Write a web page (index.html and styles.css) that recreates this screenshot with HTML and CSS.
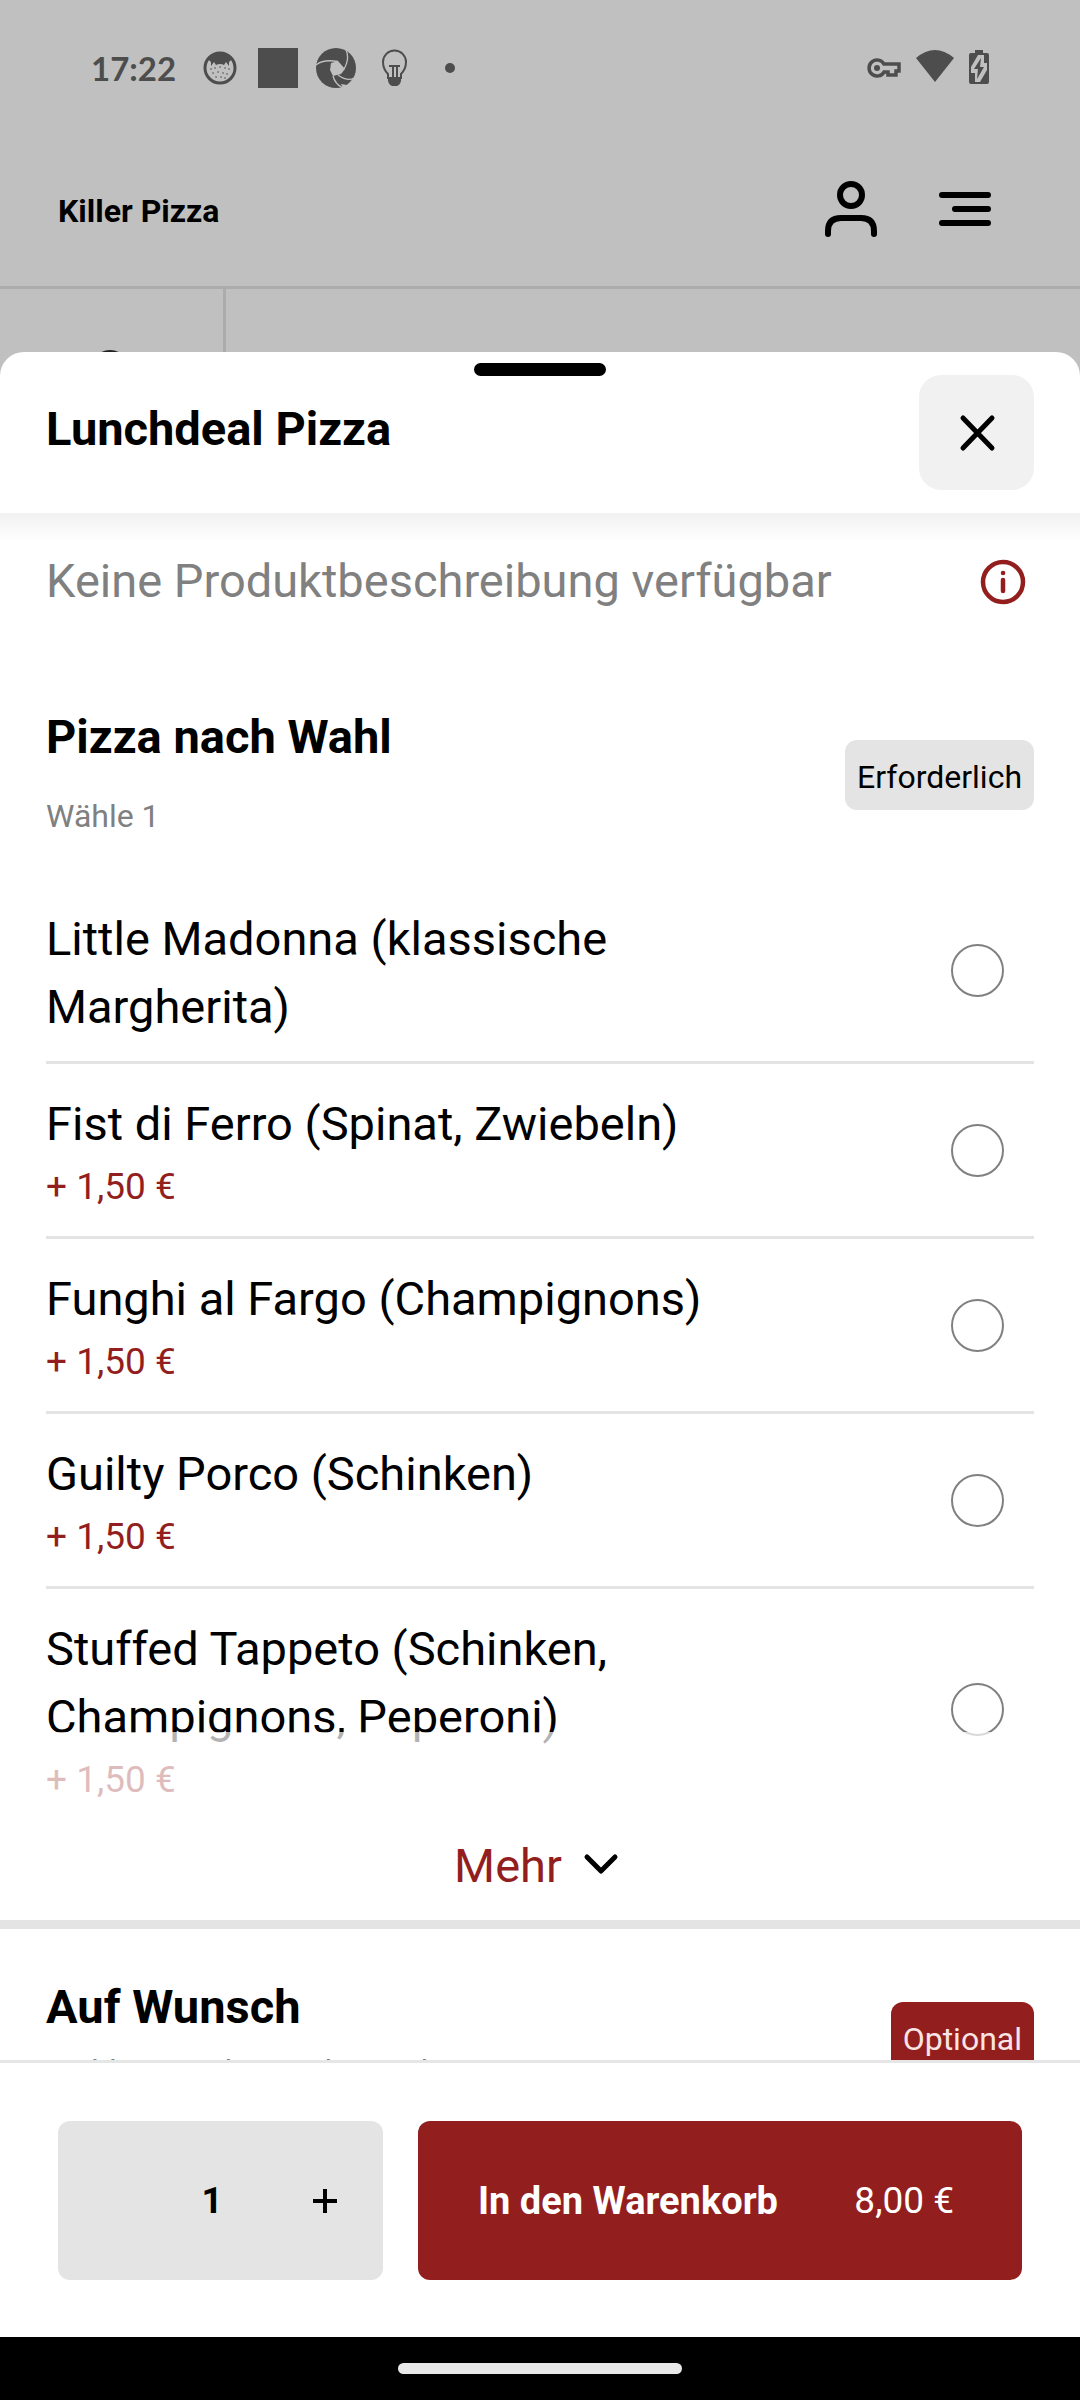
FILE: index.html
```html
<!DOCTYPE html>
<html lang="de">
<head>
    <meta charset="UTF-8">
    <meta name="viewport" content="width=device-width, initial-scale=1.0">
    <title>Killer Pizza - Lunchdeal Pizza</title>
    <link rel="stylesheet" href="styles.css">
</head>
<body>
    <div id="backdrop">
        <div class="status-bar">
            <div class="status-left">
                <span class="time">17:22</span>
                <svg class="status-icon" viewBox="0 0 40 40">
                    <circle cx="20" cy="20" r="15" fill="none" stroke="currentColor" stroke-width="3"/>
                    <path fill="currentColor" d="M8 11Q13 4 20 4T32 11L29 14V18L26 14L24 17Q20 15 16 17L14 14L11 18V14Z"/>
                    <path fill="none" stroke="currentColor" stroke-width="1.5" stroke-linecap="round" d="M11 21h.1M15 20h.1M20 19h.1M25 20h.1M29 21h.1M13 25h.1M18 24h.1M23 25h.1M27 26h.1M16 29h.1M21 29h.1M25 30h.1"/>
                </svg>
                <svg class="status-icon" viewBox="0 0 40 40"><path fill="currentColor" d="M0 0h40v40H0z"/></svg>
                <svg class="status-icon" viewBox="0 0 40 40">
                    <circle cx="20" cy="20" r="20" fill="currentColor"/>
                    <path fill="#c0c0c0" d="M15 15L22 13L29 21L25 26L17 28L14 22Z"/>
                    <path fill="none" stroke="#c0c0c0" stroke-width="1.3" d="M0 17Q7 11 22 13.500M30 2Q34 10 28 21M38 30Q32 34 22 27M27 40Q19 36 17 28"/>
                    <path fill="#c0c0c0" d="M27 40L25 36L31 37L37 31L40 33V40Z"/>
                </svg>
                <svg class="status-icon" viewBox="0 0 40 40">
                    <path fill="none" stroke="currentColor" stroke-width="2" d="M14 31V26Q9 21 9 14A11.500 11.500 0 0 1 32 14Q32 21 27 26V31"/>
                    <path fill="currentColor" d="M14 29H27V33Q26 37 23 38H18Q15 37 14 33ZM15 17H26V19H24V30H22V19H20V30H18V19H15Z"/>
                </svg>
                <svg class="status-icon" viewBox="0 0 40 40"><circle cx="18" cy="20" r="5" fill="currentColor"/></svg>
            </div>
            <div class="status-right">
                <svg width="34" height="40" viewBox="0 0 34 40">
                    <path fill="none" stroke="currentColor" stroke-width="3.500" d="M17 16A8 8 0 1 0 17 24H21V27H29V23H32V16Z"/>
                    <circle cx="10" cy="20" r="3" fill="currentColor"/>
                </svg>
                <svg width="40" height="40" viewBox="0 0 40 40"><path fill="currentColor" d="M1 10Q20-6 39 10L20 34Z"/></svg>
                <svg width="20" height="40" viewBox="0 0 20 40">
                    <path fill="currentColor" d="M6 2h8v3h4q2 0 2 2v27q0 2-2 2H2q-2 0-2-2V7q0-2 2-2h4z"/>
                    <path fill="#c0c0c0" d="M9 7H15V15H18V22L11 34H6V25H2V19Z"/>
                    <path fill="currentColor" d="M12 10L5 21H9L8 31L15 19H11Z"/>
                </svg>
            </div>
        </div>
        <header class="shop-header">
            <a class="shop-name" href="#">Killer Pizza</a>
            <div class="shop-actions">
                <button type="button" class="icon-btn" aria-label="Konto">
                    <svg width="60" height="60" viewBox="0 0 60 60" fill="none" stroke="#000" stroke-width="6" stroke-linecap="round">
                        <circle cx="30" cy="14" r="11"/>
                        <path d="M7 53V50Q7 37 20 37H40Q53 37 53 50V53"/>
                    </svg>
                </button>
                <button type="button" class="icon-btn" aria-label="Menü">
                    <svg width="60" height="60" viewBox="0 0 60 60" fill="none" stroke="#000" stroke-width="6" stroke-linecap="round">
                        <path d="M7 14H53M20 28H53M7 42H53"/>
                    </svg>
                </button>
            </div>
        </header>
        <nav class="shop-tabs">
            <a class="search-tab" href="#" aria-label="Suche">
                <svg width="48" height="48" viewBox="0 0 48 48" fill="none" stroke="#222" stroke-width="4" stroke-linecap="round">
                    <circle cx="20" cy="20" r="17"/>
                    <path d="M33 33L45 45"/>
                </svg>
            </a>
        </nav>
    </div>

    <main id="sheet">
        <div class="sheet-header">
            <span class="handle"></span>
            <h1>Lunchdeal Pizza</h1>
            <button type="button" class="close-btn" aria-label="Schließen">
                <svg width="48" height="48" viewBox="0 0 48 48" fill="none" stroke="#000" stroke-width="5" stroke-linecap="round">
                    <path d="M10 9L39 39M39 9L10 39"/>
                </svg>
            </button>
        </div>

        <div class="sheet-body">
            <div class="description">
                <p>Keine Produktbeschreibung verfügbar</p>
                <button type="button" class="icon-btn" aria-label="Produktinformationen">
                    <svg width="60" height="60" viewBox="0 0 60 60" fill="none" stroke="#931e1e" stroke-linecap="round">
                        <circle cx="29" cy="31" r="20" stroke-width="4.500"/>
                        <path stroke-width="4.500" d="M29 29V40M29 22h.1"/>
                    </svg>
                </button>
            </div>

            <section class="group group-required">
                <div class="group-header">
                    <div class="group-text">
                        <h2>Pizza nach Wahl</h2>
                        <p>Wähle 1</p>
                    </div>
                    <span class="badge">Erforderlich</span>
                </div>
                <ul class="options">
                    <li>
                        <label for="madonna">Little Madonna (klassische Margherita)</label>
                        <input type="radio" name="pizza" id="madonna">
                    </li>
                    <li>
                        <label for="ferro">Fist di Ferro (Spinat, Zwiebeln) <span class="extra">+ 1,50 €</span></label>
                        <input type="radio" name="pizza" id="ferro">
                    </li>
                    <li>
                        <label for="fargo">Funghi al Fargo (Champignons) <span class="extra">+ 1,50 €</span></label>
                        <input type="radio" name="pizza" id="fargo">
                    </li>
                    <li>
                        <label for="porco">Guilty Porco (Schinken) <span class="extra">+ 1,50 €</span></label>
                        <input type="radio" name="pizza" id="porco">
                    </li>
                    <li>
                        <label for="tappeto">Stuffed Tappeto (Schinken, Champignons, Peperoni) <span class="extra">+ 1,50 €</span></label>
                        <input type="radio" name="pizza" id="tappeto">
                    </li>
                </ul>
                <!-- fades out the last option -->
                <div class="more">
                    <button type="button" class="more-btn">
                        Mehr
                        <svg width="48" height="48" viewBox="0 0 48 48" fill="none" stroke="#000" stroke-width="5" stroke-linecap="round" stroke-linejoin="round">
                            <path d="M9 15L23 29L37 15"/>
                        </svg>
                    </button>
                </div>
            </section>

            <section class="group group-optional">
                <div class="group-header">
                    <div class="group-text">
                        <h2>Auf Wunsch</h2>
                        <p>Wähle so viele wie du möchtest</p>
                    </div>
                    <span class="badge badge-optional">Optional</span>
                </div>
            </section>
        </div>

        <form class="cart-bar">
            <div class="quantity">
                <input type="text" inputmode="numeric" value="1" aria-label="Anzahl">
                <button type="button" aria-label="Mehr">
                    <svg width="24" height="24" viewBox="0 0 24 24" fill="none" stroke="#000" stroke-width="4">
                        <path d="M0 12H24M12 0V24"/>
                    </svg>
                </button>
            </div>
            <button type="submit" class="cart-btn">
                <strong>In den Warenkorb</strong>
                <span>8,00 €</span>
            </button>
        </form>
    </main>

    <div class="nav-bar"><span></span></div>
</body>
</html>
```
FILE: styles.css
```css
* {
    margin: 0;
    padding: 0;
    box-sizing: border-box;
}

body {
    font-family: 'Roboto', sans-serif;
    font-size: 47px;
    line-height: 68px;
    color: #000;
    background: #c0c0c0;
    display: flex;
    flex-direction: column;
    height: 100vh;
    overflow: hidden;
}

button,
input {
    font: inherit;
    color: inherit;
    border: none;
    background: none;
}

button {
    cursor: pointer;
}

svg {
    display: block;
    flex-shrink: 0;
}

/* Status bar */
.status-bar {
    display: flex;
    justify-content: space-between;
    align-items: center;
    height: 136px;
    padding: 0 91px;
    color: #4d4d4d;
}

.status-left,
.status-right {
    display: flex;
    align-items: center;
}

.status-left {
    gap: 18px;
}

.status-right {
    gap: 14px;
}

.time {
    font-family: 'Lato', sans-serif;
    font-size: 33px;
    font-weight: bold;
    margin-right: 6px;
}

.status-icon {
    width: 40px;
    height: 40px;
}

/* Page behind the sheet */
.shop-header {
    display: flex;
    justify-content: space-between;
    align-items: center;
    height: 153px;
    padding: 0 85px 0 58px;
    border-bottom: 3px solid #acacac;
}

.shop-name {
    font-size: 32px;
    font-weight: bold;
    color: #000;
    text-decoration: none;
}

.shop-actions {
    display: flex;
    gap: 54px;
}

.shop-tabs {
    display: flex;
    height: 63px;
    overflow: hidden;
}

.search-tab {
    width: 226px;
    padding: 60px 90px;
    border-right: 3px solid #acacac;
}

/* Sheet */
#sheet {
    display: flex;
    flex-direction: column;
    flex: 1;
    min-height: 0;
    background: #fff;
    border-radius: 24px 24px 0 0;
}

.sheet-header {
    position: relative;
    display: flex;
    justify-content: space-between;
    align-items: flex-start;
    padding: 23px 46px;
}

.handle {
    position: absolute;
    top: 11px;
    left: 50%;
    width: 132px;
    height: 13px;
    border-radius: 7px;
    background: #000;
    transform: translateX(-50%);
}

h1,
h2 {
    font-size: 47px;
    font-weight: bold;
}

h1 {
    padding-top: 20px;
}

.close-btn {
    display: flex;
    justify-content: center;
    align-items: center;
    width: 115px;
    height: 115px;
    border-radius: 22px;
    background: #f1f1f1;
}

.sheet-body {
    flex: 1;
    min-height: 0;
    overflow-y: auto;
    scrollbar-width: none;
    background: linear-gradient(#f1f1f1, #fff 28px);
}

.description {
    display: flex;
    justify-content: space-between;
    align-items: center;
    padding: 34px 46px 0;
    color: #808080;
}

/* Option groups */
.group-header {
    display: flex;
    justify-content: space-between;
    align-items: center;
    padding: 0 46px;
}

.group-text p {
    font-size: 32px;
    line-height: 60px;
    color: #808080;
}

.group-required {
    position: relative;
    padding: 88px 0 91px;
}

.group-required .group-text p {
    margin-top: 15px;
}

.group-optional {
    padding: 44px 0;
    border-top: 9px solid #e4e4e4;
}

.badge {
    padding: 7px 12px 3px;
    border-radius: 12px;
    font-size: 32px;
    line-height: 60px;
    background: #e4e4e4;
}

.badge-optional {
    background: #931e1e;
    color: #f8e4e4;
}

.options {
    list-style: none;
    margin-top: 33px;
    padding: 0 46px;
}

.options li {
    display: flex;
    align-items: center;
    justify-content: space-between;
    gap: 200px;
    padding: 20px 30px 20px 0;
    border-bottom: 3px solid #e4e4e4;
}

.options li:last-child {
    border-bottom: none;
}

.options label {
    flex: 1;
    padding-top: 6px;
}

.extra {
    display: block;
    font-size: 37px;
    line-height: 58px;
    color: #931e1e;
}

.options input {
    appearance: none;
    width: 53px;
    height: 53px;
    border: 2px solid #808080;
    border-radius: 50%;
    background: #fff;
}

.more {
    position: absolute;
    left: 0;
    right: 0;
    bottom: 0;
    display: flex;
    justify-content: center;
    padding: 100px 0 20px;
    background: rgba(255, 255, 255, 0.7);
}

.more-btn {
    display: flex;
    align-items: center;
    gap: 16px;
    color: #931e1e;
}

/* Cart bar */
.cart-bar {
    display: flex;
    gap: 35px;
    padding: 58px 58px 57px;
    border-top: 3px solid #e6e6e6;
    font-size: 37px;
}

.quantity {
    display: flex;
    width: 325px;
    height: 159px;
    padding-left: 100px;
    border-radius: 12px;
    background: #e4e4e4;
}

.quantity input {
    width: 108px;
    font-weight: bold;
    text-align: center;
}

.quantity button {
    display: flex;
    flex: 1;
    justify-content: center;
    align-items: center;
}

.cart-btn {
    display: flex;
    flex: 1;
    justify-content: space-between;
    align-items: center;
    padding: 0 68px 0 60px;
    border-radius: 12px;
    background: #931e1e;
    color: #fff;
}

.cart-btn strong {
    font-size: 38px;
}

/* System navigation */
.nav-bar {
    display: flex;
    justify-content: center;
    align-items: center;
    height: 63px;
    background: #000;
}

.nav-bar span {
    width: 284px;
    height: 11px;
    border-radius: 6px;
    background: #e8e8e8;
}
```
